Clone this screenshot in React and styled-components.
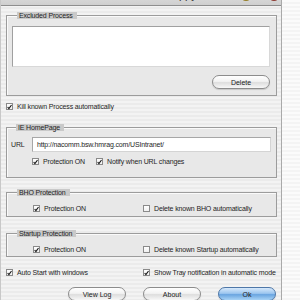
import React from 'react';
import styled, { createGlobalStyle } from 'styled-components';

const GlobalStyle = createGlobalStyle`
  html, body {
    margin: 0;
    padding: 0;
    background: #fbfbfb;
  }
  body {
    width: 300px;
    height: 300px;
    overflow: hidden;
    font-family: "Liberation Sans", Arial, sans-serif;
    font-size: 7px;
    letter-spacing: -0.15px;
    color: #1e1e1e;
  }
`;

const Page = styled.div`
  display: flex;
  width: 300px;
  height: 300px;
  overflow: hidden;
  background: repeating-linear-gradient(180deg, #fbfbfb 0, #fbfbfb 2px, #f4f4f4 2px, #f4f4f4 4px);
`;

const Window = styled.div`
  width: 282px;
  flex: none;
  border-right: 1px solid #a9a9a9;
  border-left: 1px solid #c8c8c8;
  box-sizing: border-box;
  background: repeating-linear-gradient(180deg, #f3f3f3 0, #f3f3f3 2px, #ebebeb 2px, #ebebeb 4px);
  display: flex;
  flex-direction: column;
  margin-top: -15px;
`;

const TitleBar = styled.div`
  height: 20px;
  flex: none;
  display: flex;
  align-items: center;
  justify-content: flex-end;
  padding-right: 1px;
  background: linear-gradient(#e9e9e9, #cfcfcf);
  border-bottom: 1px solid #8e8e8e;
  font-size: 11px;
  letter-spacing: 0;
  color: #333;
`;

const TitleText = styled.span`
  margin-right: 3px;
`;

const Light = styled.span`
  width: 12px;
  height: 12px;
  border-radius: 50%;
  background: ${(p) => p.$color};
  border: 1px solid rgba(0, 0, 0, 0.35);
  box-sizing: border-box;
  margin-left: ${(p) => p.$gap || 0}px;
`;

const Content = styled.div`
  display: flex;
  flex-direction: column;
  padding: 0 4px 0 5px;
`;

const Group = styled.fieldset`
  margin: ${(p) => p.$top}px 0 0 0;
  padding: ${(p) => p.$pad || '4px 5px 5px 5px'};
  border: 1px solid #9c9c9c;
  background: #e8e8e8;
  box-shadow: inset 1px 1px 0 #fafafa;
  display: flex;
  flex-direction: column;
  min-width: 0;
  height: ${(p) => p.$h}px;
  box-sizing: border-box;
`;

const Legend = styled.legend`
  background: #c9c9c9;
  padding: 0 4px 0 2px;
  margin-left: 5px;
  height: 7px;
  line-height: 7px;
  font-size: 7px;
`;

const ListBox = styled.div`
  height: 41px;
  background: #ffffff;
  border: 1px solid #a0a0a0;
  border-right-color: #d8d8d8;
  border-bottom-color: #d8d8d8;
  box-sizing: border-box;
`;

const RightRow = styled.div`
  display: flex;
  justify-content: flex-end;
  margin-top: 8px;
`;

const Pill = styled.button`
  width: ${(p) => p.$w || 58}px;
  height: 14px;
  padding: 0;
  border-radius: 7px;
  font-family: "Liberation Sans", Arial, sans-serif;
  font-size: 7px;
  color: #222;
  border: 1px solid ${(p) => (p.$blue ? '#4e77a8' : '#8c8c8c')};
  background: ${(p) =>
    p.$blue
      ? 'linear-gradient(#d7e9fb 0%, #9cc6ef 45%, #6aa5e0 55%, #a9d3f6 100%)'
      : 'linear-gradient(#ffffff 0%, #f2f2f2 45%, #dedede 55%, #f7f7f7 100%)'};
  box-shadow: 0 1px 1px rgba(0, 0, 0, 0.15);
`;

const CheckRow = styled.label`
  display: flex;
  align-items: center;
  height: 9px;
  margin-top: ${(p) => p.$top || 0}px;
  white-space: nowrap;
`;

const Row = styled.div`
  display: flex;
  align-items: center;
  margin-top: ${(p) => p.$top || 0}px;
`;

const Cell = styled.div`
  width: ${(p) => p.$w}px;
  margin-left: ${(p) => p.$left || 0}px;
  flex: none;
  display: flex;
`;

const Box = styled.span`
  width: 7px;
  height: 7px;
  flex: none;
  box-sizing: border-box;
  border: 1px solid #8a8a8a;
  background: linear-gradient(#ffffff, #f0f0f0);
  margin-right: 4px;
  display: flex;
  align-items: center;
  justify-content: center;
`;

const UrlLabel = styled.span`
  width: 21px;
  flex: none;
  font-size: 7px;
`;

const UrlInput = styled.div`
  flex: 1;
  height: 15px;
  display: flex;
  align-items: center;
  padding-left: 4px;
  background: #ffffff;
  border: 1px solid #a7a7a7;
  border-right-color: #d4d4d4;
  border-bottom-color: #d4d4d4;
  box-sizing: border-box;
`;

const ButtonRow = styled.div`
  display: flex;
  margin-top: 10px;
  padding-left: 62px;
  gap: 17px;
`;

function Check({ checked, children, top }) {
  return (
    <CheckRow $top={top}>
      <Box>
        {checked && (
          <svg width="6" height="6" viewBox="0 0 6 6">
            <path d="M0.8 3 L2.3 4.8 L5.4 0.6" fill="none" stroke="#111" strokeWidth="1.3" />
          </svg>
        )}
      </Box>
      {children}
    </CheckRow>
  );
}

export default function App() {
  return (
    <>
      <GlobalStyle />
      <Page>
        <Window>
          <TitleBar>
            <TitleText>Happy Intranet</TitleText>
            <Light $color="#e7c23a" />
            <Light $color="#d9584c" $gap={16} />
          </TitleBar>
          <Content>
            <Group $top={6} $h={84} $pad="7px 6px 5px 5px">
              <Legend>Excluded Process</Legend>
              <ListBox />
              <RightRow>
                <Pill $w={58}>Delete</Pill>
              </RightRow>
            </Group>
            <Check checked top={6}>Kill known Process automatically</Check>

            <Group $top={13} $h={54} $pad="6px 5px 5px 4px">
              <Legend>IE HomePage</Legend>
              <Row>
                <UrlLabel>URL</UrlLabel>
                <UrlInput>http://nacomm.bsw.hmrag.com/USIntranet/</UrlInput>
              </Row>
              <Row $top={5}>
                <Cell $w={64} $left={21}>
                  <Check checked>Protection ON</Check>
                </Cell>
                <Check checked>Notify when URL changes</Check>
              </Row>
            </Group>

            <Group $top={11} $h={28} $pad="8px 5px 5px 5px">
              <Legend>BHO Protection</Legend>
              <Row>
                <Cell $w={110} $left={21}>
                  <Check checked>Protection ON</Check>
                </Cell>
                <Check>Delete known BHO automatically</Check>
              </Row>
            </Group>

            <Group $top={13} $h={27} $pad="8px 5px 5px 5px">
              <Legend>Startup Protection</Legend>
              <Row>
                <Cell $w={110} $left={21}>
                  <Check checked>Protection ON</Check>
                </Cell>
                <Check>Delete known Startup automatically</Check>
              </Row>
            </Group>

            <Row $top={11}>
              <Cell $w={137}>
                <Check checked>Auto Start with windows</Check>
              </Cell>
              <Check checked>Show Tray notification in automatic mode</Check>
            </Row>

            <ButtonRow>
              <Pill>View Log</Pill>
              <Pill>About</Pill>
              <Pill $blue>Ok</Pill>
            </ButtonRow>
          </Content>
        </Window>
      </Page>
    </>
  );
}
